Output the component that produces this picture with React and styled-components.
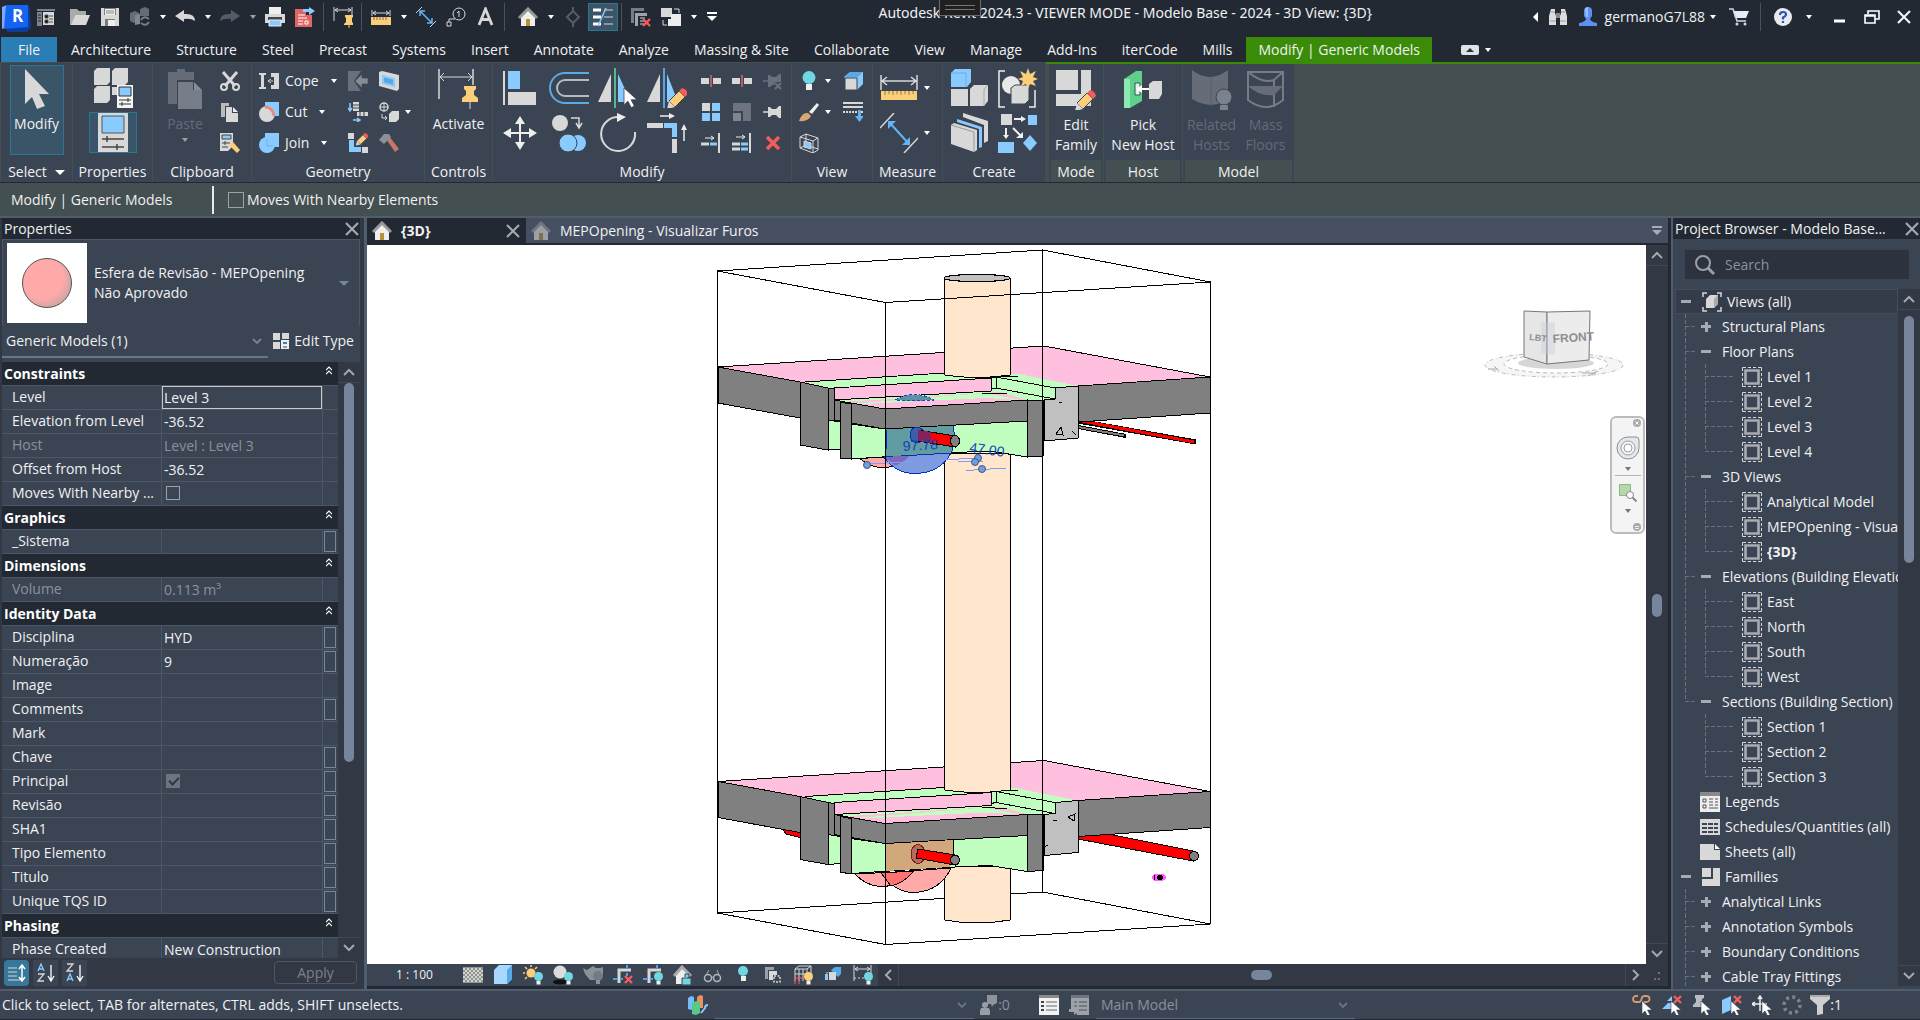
import styled, { createGlobalStyle, css } from "styled-components"

const C = {
    dark: "#222933",
    panel: "#3b4453",
    track: "#323844",
    olive: "#434f50",
    line: "#4b5667",
    frame: "#505d6e",
    thumb: "#76859c",
    text: "#f0f1f2",
    dim: "#8b919b",
    off: "#646b78",
    green: "#3a8c08",
    accent: "#2b7599"
}
const L = "#d8d8d8"
const B = "#8acbff"
const Y = "#fbcf7a"
const R = "#f45c5c"
const K = "#3b4453"
const D = "#69707c"
const T = "#70d6e0"

const GlobalStyle = createGlobalStyle`
    * {
        box-sizing: border-box;
    }
    body {
        margin: 0;
        background: ${C.dark};
        color: ${C.text};
        font-family: "Open Sans", "Noto Sans", sans-serif;
        font-size: 14px;
        line-height: 20px;
    }
    button, input, select {
        font: inherit;
        color: inherit;
        margin: 0;
        padding: 0;
        border: 0;
        background: none;
        border-radius: 0;
    }
`

/* ---------- icons ---------- */

const pencil = (x, y) => (
    <g transform={`translate(${x} ${y})`}>
        <path d="M1 13 11 3l6 6L7 19z" fill={Y} stroke={K} />
        <path d="m11 3 3-3q5 1 6 6l-3 3z" fill={R} />
        <path d="m1 13-2 8 8-2z" fill={L} />
    </g>
)
const pointer = (x, y) => (
    <path transform={`translate(${x} ${y})`} d="M0 0v13l3-3 2.500 5 2.500-1-2.500-5H10z" fill="#fff" stroke={K} strokeWidth=".6" />
)
const bulb = (x, y, fill = T) => (
    <g transform={`translate(${x} ${y})`}>
        <circle cx="4.500" cy="4.500" r="4.500" fill={fill} />
        <path d="M2.500 9h4v3.500h-4z" fill="#eee" />
    </g>
)
const cross = (x, y, s = 8) => (
    <path d={`M${x} ${y}l${s} ${s}M${x + s} ${y}l${-s} ${s}`} stroke={R} strokeWidth="2.400" fill="none" />
)

const icons = {
    revit: [30, 32, <>
        <path d="M4 9 28 4l2 22-4 5H6z" fill="#0a3f9e" />
        <path d="M1 6 6 4v22l-5 2z" fill="#7fa8ff" />
        <path d="M5 4h22v22L3 28z" fill="#1463f3" />
        <text x="11" y="21" fontSize="17" fontWeight="700" fill="#fff" fontFamily="Open Sans, sans-serif">R</text>
    </>],
    start: [20, 20, <>
        <path d="M1 2h18v2H1zM1 5h5v14H1z" fill="#7d838d" /><path d="M7 5h11v13H7z" fill={L} />
        <path d="M2 8h3M2 11h3M2 14h3" stroke={C.dark} /><path d="M9 8h3v3H9zM9 13h3v3H9zM13 9h4M13 12h4M13 15h4" stroke="#555" />
    </>],
    open: [20, 20, <><path d="M0 2h7l2 2h7v4H5L2 18H0z" fill="#aaa" /><path d="M5 8h15l-4 10H1z" fill={L} /></>],
    save: [20, 20, <><path d="M1 1h18v18H1z" fill={L} /><path d="M4 1h12v7H4zM5 12h10v7H5z" fill="#7c7c7c" /><path d="M5 8h10V2H5zM8 13h7v6H8z" fill="#eee" /><path d="M6 4h8M6 6h8" stroke="#888" /></>],
    sync: [22, 20, <><path d="m1 6 5-2 4 2v8l-5 2-4-2zM11 2l5-2 4 2v7H11z" fill="#666c76" /><path d="m6 8 5-1v10l-5 1z" fill="#80858e" /><path d="M12 13q3-5 8-1M20 15q-3 5-8 1" stroke="#777d87" fill="none" strokeWidth="2" /></>],
    undo: [20, 20, <path d="m0 9 9-6v4q11-1 11 7-4-3-11-2v3z" fill={L} />],
    redo: [20, 20, <path d="m20 9-9-6v4Q0 6 0 14q4-3 11-2v3z" fill="#555c68" />],
    print: [20, 20, <><path d="M4 0h12v7H4z" fill="#eee" /><path d="M0 7h20v9H0z" fill={L} /><path d="M3 10h14v3H3z" fill="#444" /><path d="M4 13h12v6H4z" fill={B} stroke="#eee" /></>],
    pdf: [20, 20, <><path d="M0 2h11v6h6v12H0z" fill="#e06565" /><path d="M3 8h7M3 11h9M3 14h5M3 17h5M10 14h3v3h-3z" stroke="#fff" fill="none" /><path d="M8 2h6V0l6 4-6 4V5H8z" fill={B} /></>],
    alignDim: [20, 22, <><path d="M1 1v14M19 1v9M2 4h16M5 2 2 4l3 2M15 2l3 2-3 2" stroke={L} fill="none" /><path d="M12 9h8v2l-1 1v4l2 2v1h-10v-1l2-2v-4l-1-1z" fill={Y} /><path d="M16 18v4" stroke={Y} /></>],
    measure: [20, 20, <><path d="M1 3v6M19 3v6M2 6h16M5 4 2 6l3 2M15 4l3 2-3 2" stroke={L} fill="none" /><path d="M0 10h20v8H0z" fill={Y} /><path d="M3 10v3M6 10v3M9 10v3M12 10v3M15 10v3" stroke="#866" /></>],
    dimLine: [20, 20, <><path d="M0 6 6 0M14 20l6-6" stroke={L} /><path d="m4 4 12 12M4 9V4h5M11 16h5v-5" stroke="#64b4f5" fill="none" strokeWidth="1.500" /></>],
    tag: [20, 20, <><circle cx="13" cy="7" r="6" fill="none" stroke={L} /><path d="m11 6 2-2v6M9 12H3v3" stroke={L} fill="none" /><path d="M1 15h4v4H1z" fill="none" stroke={L} /></>],
    letter: [20, 20, <path d="M3 18 9.500 2 16 18M5.500 12.500h8" stroke={L} fill="none" strokeWidth="2.800" />],
    home: [20, 20, <><path d="M3 9v10h14V9l-7-7z" fill="#eee" /><path d="m1 11 9-9 9 9" stroke="#999" strokeWidth="3" fill="none" /><path d="M8 12h4v7H8z" fill="#bb8f32" /></>],
    diamond: [20, 20, <><path d="m10 4 6 6-6 6-6-6z" fill="none" stroke="#555c68" strokeWidth="2" /><path d="M10 0v4M10 16v4" stroke="#555c68" strokeWidth="2" /></>],
    thin: [20, 20, <><path d="M0 3h8M0 10h8M0 17h8" stroke="#fff" strokeWidth="3" /><path d="M11 3h9M11 10h9M11 17h9" stroke={L} /><path d="M5 19 13 1" stroke={B} strokeWidth="1.500" /></>],
    closeWin: [20, 20, <><path d="M0 1h13v3H3v12H0z" fill="#777d87" /><path d="M4 6h12v3H7v10H4z" fill="#a0a4aa" /><path d="M9 11h5M9 14h4M9 17h4" stroke={L} />{cross(12, 12, 7)}</>],
    switchWin: [20, 20, <><path d="M0 1h11v9H0z" fill={L} /><path d="M10 7h10v12H7V12h3z" fill="#eee" /><path d="M13 2h5v4M6 18H2v-5" stroke={L} fill="none" /></>],
    custom: [10, 10, <><path d="M0 1h10" stroke="#fff" strokeWidth="2" /><path d="M0 4h10L5 9z" fill="#fff" /></>],
    binoc: [20, 20, <><path d="M3 2h4v4l1 3v9H1v-9zM13 2h4l2 7v9h-7v-9l1-3z" fill="#ddd" /><path d="M8 6h4v5H8z" fill="#888" /><path d="M2 14h6M12 14h6M3 5h4M13 5h4" stroke="#999" /></>],
    user: [18, 20, <><path d="M5 4q0-4 4-4t4 4v5l-2 3q1 3 7 4v3H0v-3q6-1 7-4L5 9z" fill="#5f8ff0" /><path d="M6 2q1-2 3-2v10H7z" fill="#9ebdff" /></>],
    cart: [20, 18, <><path d="M4 3h16l-3 7H6z" fill="#e8ecf5" /><path d="M0 1h4l4 12h9" stroke="#cfd8ee" fill="none" strokeWidth="1.500" /><circle cx="8" cy="16" r="1.500" fill="#cfd8ee" /><circle cx="16" cy="16" r="1.500" fill="#cfd8ee" /></>],
    help: [20, 20, <><circle cx="10" cy="10" r="9" fill="#e8eaf0" /><path d="M7 8q0-3 3-3t3 2.500q0 1.500-3 3v2M10 14v2" stroke="#2a55b5" strokeWidth="2.200" fill="none" /></>],
    min: [12, 12, <path d="M0 10h11" stroke="#fff" strokeWidth="3" />],
    restore: [16, 14, <path d="M4 4V1h11v8h-4M1 5h10v8H1zM1 6h10" stroke="#fff" strokeWidth="1.600" fill="none" />],
    close: [14, 14, <path d="m1 1 12 12M13 1 1 13" stroke="currentColor" strokeWidth="2.200" />],
    arrow: [24, 40, <path d="M0 0v35l7-7 5 12 8-3-6-12h10z" fill={L} />],
    typeProps: [40, 40, <>
        <path d="m1 3 3-3h13v14l-3 3H1zM19 3l3-3h13v14l-3 3H19zM1 21l3-3h13v14l-3 3H1z" fill={L} />
        <path d="M19 19h16v8H19z" fill={L} /><path d="M24 17h16v23H24z" fill="#f5f5f5" /><path d="M26 19h12v9H26z" fill={B} stroke="#333" />
        <path d="M26 32h12M26 36h12M35 30v4M29 34v4" stroke="#333" />
    </>],
    props: [30, 40, <><path d="M0 0h30v40H0z" fill={L} /><path d="M4 3h22v17H4z" fill={B} stroke="#555" /><path d="M4 26h22M4 34h22M9 23v6M19 31v6" stroke="#444" strokeWidth="1.500" /></>],
    paste: [34, 40, <><path d="M0 3h9V0h8v3h9v8H9v24H0z" fill="#666d79" /><path d="M10 13h15v8h9v19H10z" fill="#777e89" /><path d="m26 13 8 8h-8z" fill="#868c96" /></>],
    cut: [20, 20, <><path d="M3 1 15 15M17 1 5 15" stroke={L} strokeWidth="3" /><circle cx="4" cy="16" r="3" fill="none" stroke={L} strokeWidth="2" /><circle cx="16" cy="16" r="3" fill="none" stroke={L} strokeWidth="2" /></>],
    copy: [20, 20, <><path d="M1 1h8v3H5v11H1z" fill="#bbb" /><path d="M6 5h6v6h6v9H6z" fill={L} /><path d="m13 5 5 5h-5z" fill="#eee" /></>],
    match: [20, 20, <><path d="M0 0h13v13l-5 5H0z" fill={L} /><path d="M2 2h9v4H2z" fill={B} stroke="#444" /><path d="M2 10h8M2 14h6M5 8v4" stroke="#444" /><path d="m9 12 4-3 7 8-3 3z" fill={Y} /></>],
    cope: [20, 20, <><path d="M0 2h7v2H5v12h2v2H0v-2h2V4H0z" fill={L} /><path d="M9 10h5M12 8l-3 2 3 2" stroke={L} /><path d="M12 2h8v16h-8v-4h3V6h-3z" fill={L} /></>],
    cutGeo: [20, 20, <><path d="M6 0h14v14h-5Q15 4 6 6z" fill={B} /><circle cx="8" cy="12" r="8" fill={L} /><path d="M6 5q8 0 9 9" stroke="#e58a8a" strokeWidth="3" fill="none" /></>],
    join: [20, 20, <><path d="M6 0h14v14H6z" fill={B} /><circle cx="8" cy="12" r="8" fill={B} /><path d="M8 6v7h6" stroke="#6bb2ec" fill="none" /></>],
    notch: [20, 20, <><path d="M0 0h13L6 10l7 10H0z" fill={D} /><path d="m7 10 7-7v4h6v6h-6v4z" fill="#858b95" stroke={K} strokeWidth=".6" /></>],
    wallJoin: [20, 20, <><path d="M5 0h6v9H5zM9 10h11v4H9z" fill={L} /><path d="M2 1v7M0 6l2 3 2-3M5 18h6M9 16l3 2-3 2" stroke={B} fill="none" strokeWidth="1.500" /><path d="M5 3h6M5 6h6M12 10v4M16 10v4" stroke={K} /></>],
    beam: [20, 20, <><path d="M0 0h6v6H0zM14 14h6v6h-6z" fill={L} /><path d="M1 7h5v7h7v5H1z" fill={B} /><g transform="scale(.6) translate(14 0)">{pencil(0, 0)}</g></>],
    face: [20, 20, <><path d="m0 1 3-1 17 4v14l-2 2L0 15z" fill={L} /><path d="m4 5 11 3v7L4 12z" fill="#57a7e6" stroke={B} strokeWidth="2" /></>],
    split: [20, 20, <><circle cx="5" cy="5" r="4" fill="none" stroke={L} strokeWidth="1.500" /><path d="M5 1v8M1 5h8M3 12v4h4M6 14l2 2-2 2" stroke={L} fill="none" /><path d="m10 12 3-3h7v8l-3 3h-7z" fill={L} /></>],
    hammer: [20, 20, <><path d="m7 6 3-3 10 13-4 3z" fill="#c4776b" /><path d="m0 7 5-6h5l2 3-7 7z" fill="#8a8f98" /></>],
    activate: [42, 40, <><path d="M1 0v30M35 0v16" stroke={L} strokeWidth="1.500" /><path d="M2 8h32M6 4 2 8l4 4M30 4l4 4-4 4" stroke={L} fill="none" /><path d="M26 17h12v3l-2 2v4l4 3v4H24v-4l4-3v-4l-2-2z" fill={Y} /><path d="M32 33v7" stroke={L} /></>],
    align: [34, 36, <><path d="M1 1v34" stroke={L} strokeWidth="2" /><path d="M5 1h12v18H5z" fill={B} /><path d="M5 22h28v13H5z" fill={L} /></>],
    offset: [40, 36, <><path d="M40 3H16a14 14 0 0 0 0 30h24" stroke="#5da9e4" strokeWidth="2" fill="none" /><path d="M40 10H16a8 8 0 0 0 0 16h24" stroke="#b5bac2" strokeWidth="2" fill="none" /></>],
    mirrorPick: [40, 40, <><path d="M0 34 13 6v28z" fill={L} /><path d="M20 6v28h13z" fill={B} /><path d="M17 0v40" stroke="#57b98b" strokeWidth="2" /><g transform="translate(26 20) scale(1.300)">{pointer(0, 0)}</g></>],
    mirrorDraw: [40, 40, <><path d="M0 34 13 6v28z" fill={L} /><path d="M20 6v28h11z" fill={B} /><path d="M17 0v40" stroke="#5aa5df" strokeWidth="2" />{pencil(21, 20)}</>],
    move: [34, 34, <><path d="M17 4v26M4 17h26" stroke="#eee" strokeWidth="2" /><path d="m17 0 5 8H12zM17 34l5-8H12zM0 17l8-5v10zM34 17l-8-5v10z" fill="#eee" /></>],
    copyBig: [36, 38, <><circle cx="9" cy="9" r="8" fill={L} /><path d="M20 4h8v9M25 9l3 5 3-5" stroke={L} fill="none" strokeWidth="1.500" /><circle cx="27" cy="29" r="8" fill={B} /><circle cx="17" cy="29" r="9" fill={B} stroke={K} /></>],
    rotate: [38, 40, <><path d="M36 19A17 17 0 1 1 20 4" stroke={L} strokeWidth="2" fill="none" /><path d="m18 0 9 4-9 5z" fill="#eee" /></>],
    trim: [40, 40, <><path d="M0 10h16v5H0z" fill={L} /><path d="M17 10h13v14h-5v-9h-8z" fill={B} /><path d="M25 26h5v14h-5z" fill={L} /><path d="M13 3h10M37 28V16" stroke="#eee" strokeWidth="1.500" /><path d="m22 0 6 3-6 3zM34 17l3-6 3 6z" fill="#eee" /></>],
    splitEl: [20, 20, <><path d="M0 7h8v6H0zM12 7h8v6h-8z" fill={L} /><path d="M10 4v12" stroke="#d66" strokeWidth="1.500" /></>],
    unpin: [20, 20, <><path d="M0 10h6" stroke={D} strokeWidth="1.500" /><path d="M5 4h2l2 2h4l3-3h2v8h-6l-1 3H9l-2 2H5z" fill={D} /><path d="m12 12 6 6M18 12l-6 6" stroke={D} strokeWidth="2" /></>],
    array: [20, 20, <><path d="M1 1h8v8H1z" fill={L} /><path d="M11 1h8v8h-8zM1 11h8v8H1zM11 11h8v8h-8z" fill={B} /></>],
    scale: [20, 20, <><path d="M1 1h18v18H11V9H1z" fill="#6d747f" /><path d="M1 11h8v8H1z" fill="#7e858f" /></>],
    pin: [20, 20, <><path d="M0 10h6" stroke={L} strokeWidth="1.500" /><path d="M5 5h2l2 2h4l3-3h2v12h-2l-3-3H9l-2 2H5z" fill={L} /></>],
    trim1: [20, 20, <><path d="M4 5h8M10 3l3 2-3 2" stroke="#eee" fill="none" /><path d="M0 11h8" stroke={L} strokeWidth="3" /><path d="M9 11h7" stroke={B} strokeWidth="3" /><path d="M18 0v20" stroke={L} strokeWidth="2" /></>],
    trim2: [20, 20, <><path d="M4 4h8M10 2l3 2-3 2" stroke="#eee" fill="none" /><path d="M0 11h8M0 16h8" stroke={L} strokeWidth="3" /><path d="M9 11h7M9 16h7" stroke={B} strokeWidth="3" /><path d="M18 0v20" stroke={L} strokeWidth="2" /></>],
    del: [20, 20, <path d="m4 4 12 12M16 4 4 16" stroke={R} strokeWidth="3.500" />],
    bulb: [20, 20, <><circle cx="10" cy="6.500" r="6.500" fill={T} /><path d="M7 13h6v6H7z" fill="#eee" /></>],
    bulbSmall: [20, 20, <><circle cx="10" cy="6" r="5" fill={T} /><path d="M8 11h5v5H8z" fill="#eee" /></>],
    cube: [20, 20, <><path d="m1 6 6-5h13v12l-6 6" fill={B} /><path d="M2 7h12v12H2z" fill={L} stroke={K} /><path d="m2 6 5-5h13l-5 5z" fill="#58a9e8" /></>],
    brush: [20, 20, <><path d="m10 10 8-9 2 2-7 9z" fill="#eee" /><path d="M0 19q3-9 9-8l3 3q-3 6-12 5z" fill="#d8a873" /></>],
    lines: [20, 20, <><path d="M0 1h20M0 5h20" stroke={L} strokeWidth="2" /><path d="M0 10h20" stroke={L} strokeDasharray="2 1" strokeWidth="2" /><path d="M15 8v6h-3l4.500 6 4.500-6h-3V8z" fill="#64b4f5" /></>],
    box3: [20, 20, <><path d="M1 4 7 1l12 4v12l-5 3L1 15zM1 4l13 4 5-3M14 8v12M7 1v11l12 4M7 12l-6 3" stroke={L} fill="none" /><path d="m5 8 7 2v6l-7-2z" fill={B} stroke={L} /></>],
    measureBig: [38, 26, <><path d="M1 0v15M37 0v15M2 6h34M7 2 2 6l5 4M31 2l5 4-5 4" stroke={L} fill="none" strokeWidth="1.500" /><path d="M1 16h36v9H1z" fill={Y} /><path d="M5 16v4M9 16v3M13 16v4M17 16v3M21 16v4M25 16v3M29 16v4M33 16v3" stroke="#967945" /></>],
    dimBig: [38, 40, <><path d="M0 15 14 0M24 40 38 25" stroke={L} strokeWidth="1.500" /><path d="m9 9 20 22" stroke="#64b4f5" strokeWidth="2" /><path d="M8 8h8l-8 8zM30 32h-8l8-8z" fill="#64b4f5" /></>],
    assembly: [38, 38, <><path d="m0 4 4-4h16v13l-4 5H0z" fill={B} /><path d="M0 4h15v14" stroke="#62b0ec" fill="none" /><path d="M0 20h17v17H0z" fill={L} /><path d="m19 20 4-4h14v16l-4 5H19z" fill={L} /><path d="M33 37V20l4-4" stroke="#aaa" fill="none" /></>],
    group: [40, 40, <><path d="M7 3H1v36h6M31 39h6V22" stroke="#eee" strokeWidth="1.500" fill="none" /><circle cx="13" cy="17" r="9" fill="#e8e8e8" /><path d="m13 20 4-3h14v15l-4 4H13z" fill={L} stroke={K} /><path d="m30 0 2 6 6-3-3 6 5 2-5 2 3 5-6-2-2 5-2-5-5 2 2-5-5-2 5-2-3-6 6 3z" fill={Y} /></>],
    part: [38, 40, <><path d="m12 0 25 8v20l-4 2V12L12 4z" fill={L} /><path d="m6 6 25 8v20l-3 1V16L6 9z" fill={B} /><path d="m0 12 3-2 23 7v20l-3 2-23-8z" fill={L} /><path d="m0 12 23 7v20" stroke="#999" fill="none" /></>],
    similar: [40, 40, <><path d="M3 1h11v11H3z" fill={L} /><path d="M30 2h9v10h-9z" fill={B} /><path d="M16 6h8M8 15v7M15 15l8 8" stroke="#eee" strokeWidth="2" /><path d="m23 3 5 3-5 3zM5 22h6l-3 4zM25 19v6h-7z" fill="#eee" /><path d="M0 29h16v11H0zM32 22l7 8-7 8-7-8z" fill={B} /></>],
    editFamily: [40, 40, <><path d="M0 0h22v20H0z" fill={L} /><path d="M25 0h10v36H0V24h25z" fill={L} />{pencil(20, 20)}</>],
    pickHost: [40, 40, <><path d="m1 9 12-8h6v30L7 38H1z" fill="#5fd08c" /><path d="m1 9 6 0v29H1z" fill="#8ceab0" /><path d="M12 13h5v12h-5z" fill="#eee" stroke="#2d5d45" /><path d="M16 19h11" stroke="#fff" strokeWidth="2" /><path d="m13 19 6-4v8z" fill="#fff" /><path d="m26 14 4-3h9v13l-3 5H26z" fill={L} /></>],
    relHosts: [40, 40, <><path d="M0 0q18 14 36 0v30q-18 10-36-1z" fill="#666d79" /><path d="M19 8v28" stroke="#59606c" /><circle cx="32" cy="27" r="8" fill="#7b828d" stroke={K} /><path d="M28 35h8v5h-8z" fill="#7b828d" /></>],
    massFloors: [40, 40, <><path d="M2 2h35v28q-17 14-35 0zM2 2q15 12 26 8l9-8M28 10v27" stroke="#757c87" strokeWidth="2" fill="none" /><path d="M2 16h35l-9 9q-14 2-26-9z" fill="#666d79" /></>],
    sphere: [80, 80, <><defs><radialGradient id="sph" cx=".4" cy=".4" r=".65"><stop offset=".65" stopColor="#ffa9a9" /><stop offset="1" stopColor="#c9a5a3" /></radialGradient></defs><circle cx="40" cy="40" r="24.500" fill="url(#sph)" stroke="#555" /></>],
    editType: [16, 16, <><path d="M0 0h7v7H0zM9 0h7v6H9zM0 9h7v7H0z" fill={L} /><path d="M8 7h8v9H8z" fill="#eee" /><path d="M10 9h4v2h-4z" fill="#3b82c4" /><path d="M10 14h4" stroke="#444" /></>],
    chevUp: [12, 8, <path d="m1 7 5-5 5 5" stroke="currentColor" strokeWidth="2" fill="none" />],
    chevDown: [12, 8, <path d="m1 1 5 5 5-5" stroke="currentColor" strokeWidth="2" fill="none" />],
    chevSmall: [10, 8, <path d="m1 2 4 4 4-4" stroke="currentColor" strokeWidth="1.800" fill="none" />],
    chevLeft: [8, 12, <path d="M7 1 2 6l5 5" stroke="currentColor" strokeWidth="2" fill="none" />],
    chevRight: [8, 12, <path d="m1 1 5 5-5 5" stroke="currentColor" strokeWidth="2" fill="none" />],
    collapse: [6, 9, <path d="m0 4 3-3 3 3M0 8l3-3 3 3" stroke="#fff" fill="none" strokeWidth="1.200" />],
    sort: [20, 20, <><path d="M1 5h9M1 9h9M1 13h9M1 17h12" stroke={L} /><path d="M15 3v14M12 6l3-4 3 4M12 14l3 4 3-4" stroke="#fff" fill="none" strokeWidth="1.500" /></>],
    az: [20, 20, <><path d="M2 8 5 1l3 7M3 6h4" stroke={B} fill="none" strokeWidth="1.300" /><path d="M2 11h6l-6 7h6" stroke={L} fill="none" strokeWidth="1.300" /><path d="M15 2v15M12 13l3 5 3-5" stroke="#fff" fill="none" strokeWidth="1.300" /></>],
    za: [20, 20, <><path d="M2 1h6L2 8h6" stroke={L} fill="none" strokeWidth="1.300" /><path d="m2 18 3-7 3 7M3 16h4" stroke={B} fill="none" strokeWidth="1.300" /><path d="M15 2v15M12 13l3 5 3-5" stroke="#fff" fill="none" strokeWidth="1.300" /></>],
    search: [20, 20, <><circle cx="8" cy="8" r="7" fill="none" stroke="#9aa0aa" strokeWidth="2" /><path d="m13 13 6 6" stroke="#9aa0aa" strokeWidth="3" /></>],
    views: [20, 20, <><path d="M1 5V1h4M15 1h4v4M19 15v4h-4M5 19H1v-4" stroke={L} fill="none" strokeWidth="1.500" /><path d="m4 7 4-4h8v9l-4 4H4z" fill={L} /><path d="m12 7 4-4v9l-4 4z" fill="#aaa" /></>],
    view: [20, 20, <><path d="M.5 4V.5H4M16 .5h3.500V4M19.500 16v3.500H16M4 19.500H.5V16M6 .5h3M11 .5h3M6 19.500h3M11 19.500h3M.5 6v3M.5 11v3M19.500 6v3M19.500 11v3" stroke={L} fill="none" /><path d="M3.500 3.500h13v13h-13z" stroke="#a9acb2" fill="none" strokeWidth="2.600" /></>],
    legend: [20, 20, <><path d="M0 0h20v20H0z" fill="#eee" /><path d="M0 0h20v4H0z" fill="#8a8a85" /><path d="M3 7h3v3H3zM3 13h3v3H3zM9 7h4M15 7h3M9 10h4M15 10h3M9 13h4M15 13h3M9 16h9" stroke="#555" fill="none" /></>],
    schedule: [20, 16, <><path d="M0 0h20v16H0z" fill={L} /><path d="M2 5h5M8 5h5M14 5h4M2 9h5M8 9h5M14 9h4M2 13h5M8 13h5M14 13h4" stroke={K} strokeWidth="2" /></>],
    sheet: [20, 16, <><path d="M0 0h14v6h6v10H0z" fill={L} /><path d="m15 0 5 5h-5z" fill="#fff" /></>],
    family: [18, 18, <><path d="M0 0h9v9H0z" fill={L} /><path d="M11 0h7v18H0v-7h11z" fill={L} /></>],
    detail: [20, 16, <><path d="M0 0h20v16H0z" fill="#8f948e" /><path d="M0 2h20M0 6h20M0 10h20M0 14h20" stroke="#d3d4cd" strokeWidth="2" strokeDasharray="2 2" /><path d="M2 4h20M2 8h20M2 12h20" stroke="#d3d4cd" strokeWidth="2" strokeDasharray="2 2" /></>],
    shaded: [18, 20, <><path d="m0 5 5-5h13v14l-5 5H0z" fill="#a9d8ff" /><path d="m13 5 5-5v14l-5 5z" fill="#58a9e8" /></>],
    sun: [20, 20, <><circle cx="8" cy="8" r="4.500" fill={Y} /><path d="M8 0v2M0 8h2M2 2l2 2M14 2l-2 2M2 14l2-2M14 8h2" stroke={Y} strokeWidth="1.500" />{bulb(11, 7)}</>],
    shadow: [20, 20, <><ellipse cx="7" cy="17" rx="7" ry="2.500" fill="#111" /><circle cx="7" cy="7" r="6.500" fill="#dcdcdc" />{bulb(11, 7)}</>],
    teapot: [20, 20, <><path d="m0 3 4 2 3-2 3-2 3 2h4l3-1v7l-3 6H7L2 9z" fill="#8b9099" /><circle cx="15" cy="11" r="5" fill="#757b85" /><path d="M13 15h4v4h-4z" fill="#8b9099" /></>],
    crop: [20, 20, <><path d="M6 18V5h12" stroke={L} strokeWidth="3" fill="none" /><path d="M0 14h4M14 0v3M14 8v3M7 14h3" stroke="#4ba2ec" strokeWidth="2" />{cross(12, 11, 7)}</>],
    cropShow: [20, 20, <><path d="M6 18V5h12" stroke={L} strokeWidth="3" fill="none" /><path d="M0 14h4M14 0v3M7 14h3" stroke="#4ba2ec" strokeWidth="2" />{bulb(11, 7)}</>],
    lock3d: [20, 20, <><path d="M3 9v10h7l7-10-7-7z" fill="#eee" /><path d="m1 11 8-9 9 9" stroke="#aaa" strokeWidth="3" fill="none" /><path d="M9 13h9v7H9zM12 12V9h4v3" fill={T} stroke={K} /></>],
    glasses: [20, 20, <><circle cx="5" cy="13" r="3.500" fill="none" stroke="#b4b8be" strokeWidth="1.500" /><circle cx="14" cy="13" r="3.500" fill="none" stroke="#b4b8be" strokeWidth="1.500" /><path d="M8 12h3M3 10l3-5M16 10l-2-5" stroke="#aaa" /></>],
    props2: [20, 20, <><path d="M2 2h9v3H5v9H2z" fill="#9aa0a8" /><path d="M6 6h8v4h-4v5H6z" fill={L} /><path d="M11 11h6v6h-6z" stroke={L} strokeDasharray="2 1.500" fill="none" strokeWidth="1.500" /></>],
    analytic: [20, 20, <><path d="m2 4 4-3h12v10M2 4h12v8M2 4v12M6 4v12M10 4v12M2 9h12M14 4l4-3" stroke={L} fill="none" /><path d="M1 13h10M2 19v-6M6 19v-6" stroke={R} />{bulb(11, 7, Y)}</>],
    displace: [20, 20, <><path d="m8 5 4-3h6v7l-3 3z" fill="#58a9e8" /><path d="M6 7h7v8H6z" fill={L} /><path d="m3 9 3-2h-2l-1 1zM2 9h3v6H2z" fill={B} /></>],
    reveal: [20, 20, <><path d="M1 0v16M18 0v9M2 4h15M5 2 2 4l3 2M14 2l3 2-3 2" stroke={L} fill="none" /><path d="M1 13h12" stroke={L} strokeDasharray="2 2" />{bulb(11, 7)}</>],
    worksets: [20, 20, <><path d="m0 3 3-2 3 1v11l-3 2-3-1z" fill="#78bdf5" /><path d="m9 2 3-2 3 1v12H9z" fill="#e8935e" /><path d="m4 8 4-2 4 1v11l-4 2-4-1z" fill="#5cc887" /><path d="m13 18 4-5q0-3 3-3" stroke={B} strokeWidth="2" fill="none" /></>],
    request: [18, 20, <><path d="M7 0h10v8l-4 2-1 2-1-3H7z" fill="#8f949c" /><circle cx="5" cy="10" r="3" fill="#9a9ea6" /><path d="M1 13h8l1 3v4H0v-4z" fill="#9a9ea6" /></>],
    list: [20, 20, <><path d="M0 0h20v20H0z" fill="#f2f2f2" /><path d="M0 0h20v3H0z" fill="#8a8a88" /><path d="M2 7h3M2 11h3M2 15h3" stroke="#444" strokeWidth="2" /><path d="M7 7h11M7 11h11M7 15h11" stroke="#666" /></>],
    listOff: [20, 20, <><path d="M2 0h18v20H8l-2-5H2z" fill="#9da1a8" /><path d="M2 0h18v3H2z" fill="#71767e" /><path d="M5 7h3M5 11h3M10 7h8M10 11h8M10 15h8" stroke="#4b5361" /><path d="M0 14h5v-3l5 5-5 4v-3H0z" fill="#9da1a8" /></>],
    selLinks: [20, 20, <><path d="M6 1h-2a2.500 2.500 0 0 0 0 6h3q2 0 2.500-3t3-3h2a2.500 2.500 0 0 1 0 6h-3" stroke="#d39a72" strokeWidth="1.800" fill="none" />{pointer(10, 6)}</>],
    selUnder: [20, 20, <><path d="m5 6 5-5v5zM0 14l6-6h6v6z" fill={B} />{cross(12, 1, 7)}{pointer(9, 6)}</>],
    selPin: [20, 20, <><path d="M3 0h9v3l-2 1v3l3 3v2H1v-2l3-3V4L3 3z" fill="#b9bcc1" />{pointer(9, 6)}</>],
    selFace: [20, 20, <><path d="m0 5 9-4v14l-9 4z" fill={B} />{cross(12, 1, 7)}{pointer(9, 6)}</>],
    drag: [20, 20, <><path d="M8 2v14M1 9h14M6 4l2-3 2 3M3 7 0 9l3 2" stroke="#eee" strokeWidth="1.500" fill="none" />{pointer(10, 6)}</>],
    spin: [20, 20, <circle cx="10" cy="10" r="8" fill="none" stroke="#7d838e" strokeWidth="3.500" strokeDasharray="3 3.280" />],
    filter: [20, 20, <><path d="M0 0h20v4l-7 6v9l-6 1V10L0 4z" fill="#cfcfcf" /><path d="M0 1h20" stroke="#aaa" strokeWidth="2" /></>],
    wheel: [24, 24, <><path d="M12 1h8q3 0 3 3v8a11 11 0 1 1-11-11z" fill="#e4e7ec" stroke="#8b9097" /><circle cx="12" cy="12" r="7" fill="#f4f4f4" stroke="#9aa0a6" /><circle cx="12" cy="12" r="4" fill="#fff" stroke="#9aa0a6" /></>],
    zoomBox: [18, 18, <><path d="M.5.5h11v11H.5z" fill="#b8d6ae" stroke="#8bb882" /><circle cx="11" cy="11" r="3.500" fill="#fff" stroke="#888" /><path d="m13.500 13.500 4 4" stroke="#888" strokeWidth="2" /></>],
    dotClose: [8, 8, <><circle cx="4" cy="4" r="4" fill="#aaa" /><path d="m2.500 2.500 3 3M5.500 2.500l-3 3" stroke="#fff" /></>],
    dotMenu: [8, 8, <><circle cx="4" cy="4" r="4" fill="#aaa" /><path d="M2 3.500h4M2 5.500h4" stroke="#fff" strokeWidth=".8" /></>],
    ribbonMode: [18, 10, <><rect width="18" height="10" rx="2" fill="#dfe2e6" /><path d="m5 7 4-4 4 4z" fill="#333" /></>],
    tabMenu: [10, 9, <><path d="M0 1h10" stroke="#a6adb8" strokeWidth="2" /><path d="M0 4h10L5 9z" fill="#a6adb8" /></>]
}

function Icon({ name }) {
    const [w, h, art] = icons[name]
    return <Svg width={w} height={h} viewBox={`0 0 ${w} ${h}`} aria-hidden="true">{art}</Svg>
}

/* ---------- title bar ---------- */

const quickAccess = [
    "start", "gap", "open", "save", "sync", "v", "undo", "v", "redo", "vdim", "print", "pdf", "|", "alignDim", "|",
    "measure", "v", "dimLine", "tag", "letter", "|", "gap", "home", "v", "diamond", "thin*", "|", "closeWin", "switchWin", "v"
]

function TitleBar() {
    return (
        <Title>
            <Group>
                <LogoButton aria-label="Revit"><Icon name="revit" /></LogoButton>
                {quickAccess.map((item, i) => {
                    if (item === "|") return <Separator key={i} />
                    if (item === "gap") return <Spacer key={i} />
                    if (item[0] === "v") return <CaretButton key={i} aria-label="More"><Caret color={item === "vdim" ? "#9aa0aa" : "#fff"} /></CaretButton>
                    return <ToolButton key={i} $active={item.endsWith("*")} aria-label={item}><Icon name={item.replace("*", "")} /></ToolButton>
                })}
                <CustomizeButton aria-label="Customize"><Icon name="custom" /></CustomizeButton>
            </Group>
            <Caption>Autodesk Revit 2024.3 - VIEWER MODE - Modelo Base - 2024 - 3D View: {"{3D}"}</Caption>
            <Grabber />
            <Group>
                <CaretButton aria-label="Collapse search"><LeftCaret /></CaretButton>
                <ToolButton aria-label="Find"><Icon name="binoc" /></ToolButton>
                <ToolButton aria-label="Account"><Icon name="user" /></ToolButton>
                <UserButton>germanoG7L88<Caret /></UserButton>
                <WideTool aria-label="Store"><Icon name="cart" /></WideTool>
                <Separator />
                <WideTool aria-label="Help"><Icon name="help" /></WideTool>
                <CaretButton aria-label="Help menu"><Caret /></CaretButton>
                <WindowButtons>
                    <button aria-label="Minimize"><Icon name="min" /></button>
                    <button aria-label="Restore"><Icon name="restore" /></button>
                    <button aria-label="Close"><Icon name="close" /></button>
                </WindowButtons>
            </Group>
        </Title>
    )
}

/* ---------- ribbon ---------- */

const tabs = ["Architecture", "Structure", "Steel", "Precast", "Systems", "Insert", "Annotate", "Analyze", "Massing & Site", "Collaborate", "View", "Manage", "Add-Ins", "iterCode", "Mills"]

function Tool({ name, label, caret }) {
    return (
        <SmallTool aria-label={label ? undefined : name}>
            <Icon name={name} />
            {label && <span>{label}</span>}
            {caret && <Caret />}
        </SmallTool>
    )
}

function Ribbon() {
    return (
        <>
            <TabRow>
                <FileTab>File</FileTab>
                {tabs.map(t => <RibbonTab key={t}>{t}</RibbonTab>)}
                <ContextTab>Modify | Generic Models</ContextTab>
                <ModeButton aria-label="Ribbon display"><Icon name="ribbonMode" /><Caret /></ModeButton>
            </TabRow>
            <RibbonBody>
                <Panels>
                    <Panel $w={72}>
                        <PanelBody>
                            <BigTool $active><Icon name="arrow" /><span>Modify</span></BigTool>
                        </PanelBody>
                        <PanelLabel>Select <Caret $big /></PanelLabel>
                    </Panel>
                    <Panel $w={80}>
                        <PanelBody>
                            <Grid $cols="48px" $row={45}>
                                <IconTool aria-label="Type properties"><Icon name="typeProps" /></IconTool>
                                <IconTool $active aria-label="Properties palette"><Icon name="props" /></IconTool>
                            </Grid>
                        </PanelBody>
                        <PanelLabel>Properties</PanelLabel>
                    </Panel>
                    <Panel $w={99}>
                        <PanelBody $gap={8}>
                            <BigTool disabled><Icon name="paste" /><span>Paste</span><Caret color="#9aa0aa" /></BigTool>
                            <Grid $cols="26px" $row={31}>
                                <Tool name="cut" /><Tool name="copy" /><Tool name="match" />
                            </Grid>
                        </PanelBody>
                        <PanelLabel>Clipboard</PanelLabel>
                    </Panel>
                    <Panel $w={173}>
                        <PanelBody>
                            <Grid $cols="89px 31px 38px" $row={31}>
                                <Tool name="cope" label="Cope" caret /><Tool name="notch" /><Tool name="face" />
                                <Tool name="cutGeo" label="Cut" caret /><Tool name="wallJoin" /><Tool name="split" caret />
                                <Tool name="join" label="Join" caret /><Tool name="beam" /><Tool name="hammer" />
                            </Grid>
                        </PanelBody>
                        <PanelLabel>Geometry</PanelLabel>
                    </Panel>
                    <Panel $w={68}>
                        <PanelBody><BigTool><Icon name="activate" /><span>Activate</span></BigTool></PanelBody>
                        <PanelLabel>Controls</PanelLabel>
                    </Panel>
                    <Panel $w={299}>
                        <PanelBody>
                            <Grid $cols="repeat(4, 49px)" $row={45}>
                                {["align", "offset", "mirrorPick", "mirrorDraw", "move", "copyBig", "rotate", "trim"].map(n => (
                                    <IconTool key={n} aria-label={n}><Icon name={n} /></IconTool>
                                ))}
                            </Grid>
                            <Grid $cols="repeat(3, 31px)" $row={31}>
                                {["splitEl", "splitEl", "unpin", "array", "scale", "pin", "trim1", "trim2", "del"].map((n, i) => (
                                    <IconTool key={i} aria-label={n}><Icon name={n} /></IconTool>
                                ))}
                            </Grid>
                        </PanelBody>
                        <PanelLabel>Modify</PanelLabel>
                    </Panel>
                    <Panel $w={81}>
                        <PanelBody>
                            <Grid $cols="44px 22px" $row={31}>
                                <Tool name="bulb" caret /><Tool name="cube" />
                                <Tool name="brush" caret /><Tool name="lines" />
                                <Tool name="box3" />
                            </Grid>
                        </PanelBody>
                        <PanelLabel>View</PanelLabel>
                    </Panel>
                    <Panel $w={70}>
                        <PanelBody>
                            <Grid $cols="56px" $row={45}>
                                <Tool name="measureBig" caret /><Tool name="dimBig" caret />
                            </Grid>
                        </PanelBody>
                        <PanelLabel>Measure</PanelLabel>
                    </Panel>
                    <Panel $w={103}>
                        <PanelBody>
                            <Grid $cols="48px 48px" $row={45}>
                                {["assembly", "group", "part", "similar"].map(n => (
                                    <IconTool key={n} aria-label={n}><Icon name={n} /></IconTool>
                                ))}
                            </Grid>
                        </PanelBody>
                        <PanelLabel>Create</PanelLabel>
                    </Panel>
                </Panels>
                <ContextPanels>
                    <Panel $w={55}>
                        <PanelBody><BigTool><Icon name="editFamily" /><span>Edit<br />Family</span></BigTool></PanelBody>
                        <PanelLabel $context>Mode</PanelLabel>
                    </Panel>
                    <Panel $w={79}>
                        <PanelBody><BigTool><Icon name="pickHost" /><span>Pick<br />New Host</span></BigTool></PanelBody>
                        <PanelLabel $context>Host</PanelLabel>
                    </Panel>
                    <Panel $w={112}>
                        <PanelBody $gap={0}>
                            <BigTool disabled><Icon name="relHosts" /><span>Related<br />Hosts</span></BigTool>
                            <BigTool disabled><Icon name="massFloors" /><span>Mass<br />Floors</span></BigTool>
                        </PanelBody>
                        <PanelLabel $context>Model</PanelLabel>
                    </Panel>
                </ContextPanels>
            </RibbonBody>
            <OptionsBar>
                <OptionsTitle>Modify | Generic Models</OptionsTitle>
                <CheckLabel><Check type="checkbox" $size={16} />Moves With Nearby Elements</CheckLabel>
            </OptionsBar>
        </>
    )
}

/* ---------- properties palette ---------- */

const properties = [
    ["Constraints", [
        { name: "Level", value: "Level 3", kind: "select" },
        { name: "Elevation from Level", value: "-36.52" },
        { name: "Host", value: "Level : Level 3", off: true },
        { name: "Offset from Host", value: "-36.52" },
        { name: "Moves With Nearby ...", kind: "check" }
    ]],
    ["Graphics", [{ name: "_Sistema", more: true }]],
    ["Dimensions", [{ name: "Volume", value: "0.113 m³", off: true }]],
    ["Identity Data", [
        { name: "Disciplina", value: "HYD", more: true },
        { name: "Numeração", value: "9", more: true },
        { name: "Image" },
        { name: "Comments", more: true },
        { name: "Mark" },
        { name: "Chave", more: true },
        { name: "Principal", kind: "checked", more: true },
        { name: "Revisão", more: true },
        { name: "SHA1", more: true },
        { name: "Tipo Elemento", more: true },
        { name: "Titulo", more: true },
        { name: "Unique TQS ID", more: true }
    ]],
    ["Phasing", [{ name: "Phase Created", value: "New Construction" }]]
]

function PropertyValue({ p }) {
    if (p.kind === "select") return <LevelSelect aria-label={p.name}><option>{p.value}</option></LevelSelect>
    if (p.kind === "check") return <Check type="checkbox" $size={14} aria-label={p.name} />
    if (p.kind === "checked") return <Check type="checkbox" $size={14} defaultChecked disabled aria-label={p.name} />
    return <ValueInput aria-label={p.name} defaultValue={p.value || ""} disabled={p.off} />
}

function Scroll({ start, size, rest }) {
    return (
        <ScrollBar>
            <ScrollButton aria-label="Scroll up"><Icon name="chevUp" /></ScrollButton>
            <Track>
                <Grow $n={start} /><Thumb $n={size} /><Grow $n={rest} />
            </Track>
            <ScrollButton aria-label="Scroll down"><Icon name="chevDown" /></ScrollButton>
        </ScrollBar>
    )
}

function Properties() {
    return (
        <LeftPanel>
            <PanelTitle><span>Properties</span><CloseButton aria-label="Close properties"><Icon name="close" /></CloseButton></PanelTitle>
            <TypeSelector>
                <Preview><Icon name="sphere" /></Preview>
                <span>Esfera de Revisão - MEPOpening<br />Não Aprovado</span>
                <Caret $big color={C.thumb} />
            </TypeSelector>
            <FilterRow>
                <FilterBox>
                    <FilterSelect aria-label="Filter"><option>Generic Models (1)</option></FilterSelect>
                    <Icon name="chevSmall" />
                </FilterBox>
                <EditType><Icon name="editType" />Edit Type</EditType>
            </FilterRow>
            <TableArea>
                <TableClip>
                    <Table>
                        <colgroup><col /><col width="161" /><col width="16" /></colgroup>
                        {properties.map(([group, items]) => (
                            <tbody key={group}>
                                <tr><GroupCell colSpan={3}><div>{group}<Icon name="collapse" /></div></GroupCell></tr>
                                {items.map(p => (
                                    <tr key={p.name}>
                                        <NameCell scope="row" $off={p.off}>{p.name}</NameCell>
                                        <Cell $pad={!!p.kind && p.kind !== "select"}><PropertyValue p={p} /></Cell>
                                        <Cell>{p.more && <MoreButton aria-label={`Associate ${p.name}`} />}</Cell>
                                    </tr>
                                ))}
                            </tbody>
                        ))}
                    </Table>
                </TableClip>
                <Scroll start={0} size={378} rest={175} />
            </TableArea>
            <PaletteFooter>
                <SortButton $active aria-label="Group"><Icon name="sort" /></SortButton>
                <SortButton aria-label="Sort ascending"><Icon name="az" /></SortButton>
                <SortButton aria-label="Sort descending"><Icon name="za" /></SortButton>
                <ApplyButton disabled>Apply</ApplyButton>
            </PaletteFooter>
        </LeftPanel>
    )
}

/* ---------- 3D view ---------- */

function Slab({ dy }) {
    return (
        <g transform={`translate(0 ${dy})`} stroke="#000">
            <path d="M718 367 1044 346 1210 377 1078 386 1027 400 885 409 800 382z" fill="#ffc0e0" />
            <path d="M718 367 800 382v36l-82-15z" fill="#808080" />
            <path d="M1078 386 1210 377v36l-132 9z" fill="#808080" />
            <path d="M805 382 944 373 1018 374 1078 386 1055 388v11l-28 1-142 9-45-8-10-12z" fill="#c0ffc0" stroke="none" />
            <path d="M805 382 944 373" fill="none" />
            <path d="M834 388 991 378v13l-157 9z" fill="#ffc0e0" />
            <path d="M841 402 1000 392 1027 400 885 409z" fill="#ffc0e0" stroke="none" />
            <path d="M850 404 985 393 1020 400 985 398 862 404z" fill="#c0ffc0" stroke="none" />
            <path d="M991 377h5v11l-5 1z" fill="#c0ffc0" />
            <path d="m996 377 59 11v11l-59-11z" fill="#c0ffc0" />
            <path d="m982 393 25 1M1000 376h18M985 377h10" />
            <path d="m851 424 34 5 142-8v36l-37-6-46 2-93 6z" fill="#c0ffc0" />
            <path d="m828 420 12 2v27l-12 1z" fill="#c0ffc0" />
            <path d="m828 388 6 1v32l-6-1zM834 400l51 9 142-9v21l-142 8-51-9z" fill="#808080" />
            <path d="m800 382 28 6v62l-28-5zM840 402l11 2v55l-11-1zM1027 400h16.500v56l-16.500 1z" fill="#808080" />
            <path d="m1055 388 23-2v52l-34 3v-41l11-1z" fill="#c0c0c0" />
            <path d="M885.500 409v20" />
        </g>
    )
}

function Model() {
    return (
        <Scene viewBox="367 245 1279 719" shapeRendering="crispEdges" role="img" aria-label="3D model">
            <path d="M717.500 271 1042.500 250 1210.500 282M717.500 913 1042.500 892 1210.500 924" stroke="#000" fill="none" />

            <path d="M944.500 453v337h65.500V453z" fill="#ffe6cd" stroke="#000" />
            <path d="M944.500 866v54q32 6 65.500 0v-54z" fill="#ffe6cd" stroke="#000" />
            <path d="m1078 835 30-1 85 17v10l-115-22z" fill="#f00" stroke="#000" />
            <circle cx="1194" cy="856" r="4.500" fill="#808080" stroke="#000" />
            <path d="m782 828 20 4v6l-16-4z" fill="#f00" stroke="#000" />
            <path d="m1078 421 118 21" stroke="#000" strokeWidth="5" />
            <path d="m1082 421 112 21" stroke="#f00" strokeWidth="3" />
            <path d="m1078 427 48 9" stroke="#000" strokeWidth="4" />
            <path d="m1078 427 46 8.500" stroke="#808080" strokeWidth="2" />

            <Slab dy={0} />
            <Slab dy={414.500} />

            <path d="M944.500 278v97q32 5 65.500 0v-97z" fill="#ffe6cd" stroke="#000" />
            <ellipse cx="977" cy="278" rx="33" ry="3.500" fill="#c0c0c0" stroke="#000" />
            <path d="M944.500 730v60q32 5 65.500 0v-60z" fill="#ffe6cd" />
            <path d="M944.500 730v60q32 5 65.500 0v-60" fill="none" stroke="#000" />

            <path d="m1056 434 5-7 2 8zM1059 402h3M1072 431l4 4" fill="none" stroke="#000" />
            <path d="m1068 817 7-3-1 7zM1053 821l4-1M1044 847l4-2" fill="none" stroke="#000" />

            {/* selected sphere */}
            <path d="M895 400q19-11 39 0l-20 1z" fill="#5c92a8" stroke="#1a46b8" strokeDasharray="3 2" />
            <path d="M886 429.500 953.500 425.500v14.500l-2 12.500-67 4z" fill="#609ca0" />
            <path d="M860 458.500q10 9 22 9 18 0 28-12z" fill="#ffa9a9" stroke="#000" />
            <path d="M884 457q11 16 30 16.500 26 0 37-20.500z" fill="#7f9be0" stroke="#0033b8" />
            <path d="M884 457 910 455.500q-7 8-15 10z" fill="#7b6bb8" />
            <path d="M953.500 426q2 14-2 27M886.500 430q0 15-1 26" fill="none" stroke="#0033b8" />
            <ellipse cx="917" cy="435" rx="7" ry="8" fill="#3d5fa5" stroke="#0033b8" />
            <path d="m918 430 37 6v11l-37-6z" fill="#f00" stroke="#000" />
            <path d="m918 430 13 2v11l-13-2z" fill="#87205f" />
            <ellipse cx="955" cy="441" rx="4.500" ry="5.500" fill="#808080" stroke="#000" />

            {/* lower spheres */}
            <path d="M886 844 953 840 954 860 950 867 886 871z" fill="#d1a87b" />
            <path d="M953 840v20" stroke="#000" />
            <path d="M855 874q11 12 26 12.500 20 0 34-15.500z" fill="#ffa9a9" stroke="#000" />
            <path d="M881 873q14 19.500 33 19.500 26-1 37-24.500z" fill="#ffa9a9" stroke="#000" />
            <path d="M881 873 914 871q-10 12-23 15z" fill="#ff7070" stroke="#000" />
            <ellipse cx="918" cy="854" rx="7" ry="9.500" fill="#b86a5c" stroke="#7a2020" />
            <path d="m918 849 37 6v10l-39-7z" fill="#f00" stroke="#000" />
            <ellipse cx="955" cy="860" rx="4.500" ry="5" fill="#808080" stroke="#000" />
            <ellipse cx="1159" cy="877.500" rx="7" ry="4" fill="#ff5cff" />
            <circle cx="1160" cy="877.500" r="3" />
            <path d="M1155 875q-2 3 0 5" stroke="#000" fill="none" />

            {/* temporary dimensions */}
            <path d="M867 464 978 458M958 462l25-1M966 470.500l40-2.500" stroke="#7f9bf5" />
            <g fill="#6b9fe6" stroke="#4a5670" shapeRendering="auto">
                <circle cx="867" cy="465" r="3.500" /><circle cx="978" cy="458" r="3.500" />
                <circle cx="975" cy="462" r="3.500" /><circle cx="982" cy="469" r="3.500" />
            </g>
            <g fill="#1442b8" fontFamily="Liberation Sans, sans-serif" fontSize="14">
                <text x="903" y="451" transform="rotate(-3 903 451)">97.78</text>
                <text x="969" y="452" transform="rotate(8 969 452)">47.00</text>
            </g>

            <path d="M717.500 271 885.500 302.500 1210.500 282M717.500 913 885.500 944.500 1210.500 924M717.500 271V913M885.500 302V944M1042.500 250V892M1210.500 282V924" stroke="#000" fill="none" />
        </Scene>
    )
}

function ViewCube() {
    return (
        <CubeSvg width="142" height="80" viewBox="1484 305 142 80" role="img" aria-label="View cube">
            <ellipse cx="1554" cy="365" rx="69" ry="12" fill="#f6f6f6" stroke="#bbb" strokeDasharray="4 3 1 2" />
            <ellipse cx="1556" cy="364" rx="52" ry="9" fill="#fff" stroke="#bbb" strokeDasharray="4 3" />
            <ellipse cx="1556" cy="363" rx="38" ry="6" fill="#bbb" opacity=".6" />
            <path d="M1488 369h10M1494 366l5 5M1582 373h14M1588 376l10-5" stroke="#aaa" />
            <path d="m1524 311 23 1v52l-23-7z" fill="#e6e6e6" stroke="#777" />
            <path d="m1547 312 43-1-1 49-42 4z" fill="#ececec" stroke="#777" />
            <path d="M1541 322h14v32h-14z" fill="#c9ced9" opacity=".4" />
            <g fill="#8e8e8e" fontFamily="Liberation Sans Narrow, Liberation Sans, sans-serif" fontWeight="700">
                <text x="1529" y="340" fontSize="9" transform="rotate(6 1529 340)">LBT</text>
                <text x="1553" y="343" fontSize="12" transform="rotate(-4 1553 343)">FRONT</text>
            </g>
        </CubeSvg>
    )
}

const viewTools = ["detail", "shaded", "sun", "shadow", "teapot", "crop", "cropShow", "lock3d", "glasses", "bulbSmall", "props2", "analytic", "displace", "reveal"]

function Document() {
    return (
        <Center>
            <DocTabs>
                <DocTab $active><Icon name="home" /><b>{"{3D}"}</b><CloseButton aria-label="Close view"><Icon name="close" /></CloseButton></DocTab>
                <DocTab><Faded><Icon name="home" /></Faded><span>MEPOpening - Visualizar Furos</span></DocTab>
                <TabMenu aria-label="Views"><Icon name="tabMenu" /></TabMenu>
            </DocTabs>
            <CanvasRow>
                <Canvas>
                    <Model />
                    <ViewCube />
                    <NavBar>
                        <NavEnd aria-label="Close"><Icon name="dotClose" /></NavEnd>
                        <button aria-label="Steering wheel"><Icon name="wheel" /></button>
                        <Caret color="#777" />
                        <hr />
                        <button aria-label="Zoom in region"><Icon name="zoomBox" /></button>
                        <Caret color="#777" />
                        <NavEnd aria-label="Options"><Icon name="dotMenu" /></NavEnd>
                    </NavBar>
                </Canvas>
                <Scroll start={328} size={22} rest={326} />
            </CanvasRow>
            <ViewBar>
                <ScaleButton>1 : 100</ScaleButton>
                {viewTools.map(n => <ToolButton key={n} aria-label={n}><Icon name={n} /></ToolButton>)}
                <EdgeButton aria-label="Scroll left"><Icon name="chevLeft" /></EdgeButton>
                <HTrack><Grow $n={354} /><HThumb /><Grow $n={356} /></HTrack>
                <EdgeButton aria-label="Scroll right"><Icon name="chevRight" /></EdgeButton>
                <Corner>.:</Corner>
            </ViewBar>
        </Center>
    )
}

/* ---------- project browser ---------- */

const leaf = (label, last, bold) => ({ depth: 2, label, last, bold, icon: "view" })
const tree = [
    { depth: 0, sign: "-", icon: "views", label: "Views (all)", selected: true },
    { depth: 1, sign: "+", label: "Structural Plans" },
    { depth: 1, sign: "-", label: "Floor Plans" },
    leaf("Level 1"), leaf("Level 2"), leaf("Level 3"), leaf("Level 4", true),
    { depth: 1, sign: "-", label: "3D Views" },
    leaf("Analytical Model"), leaf("MEPOpening - Visualizar Furos"), leaf("{3D}", true, true),
    { depth: 1, sign: "-", label: "Elevations (Building Elevation)" },
    leaf("East"), leaf("North"), leaf("South"), leaf("West", true),
    { depth: 1, sign: "-", label: "Sections (Building Section)", last: true },
    { ...leaf("Section 1"), open: true }, { ...leaf("Section 2"), open: true }, { ...leaf("Section 3", true), open: true },
    { depth: 0, icon: "legend", label: "Legends" },
    { depth: 0, icon: "schedule", label: "Schedules/Quantities (all)" },
    { depth: 0, icon: "sheet", label: "Sheets (all)" },
    { depth: 0, sign: "-", icon: "family", label: "Families" },
    { depth: 1, sign: "+", label: "Analytical Links" },
    { depth: 1, sign: "+", label: "Annotation Symbols" },
    { depth: 1, sign: "+", label: "Boundary Conditions" },
    { depth: 1, sign: "+", label: "Cable Tray Fittings" }
]

function Browser() {
    return (
        <RightPanel>
            <PanelTitle><span>Project Browser - Modelo Base...</span><CloseButton aria-label="Close browser"><Icon name="close" /></CloseButton></PanelTitle>
            <SearchBox>
                <Icon name="search" />
                <input type="search" placeholder="Search" aria-label="Search" />
            </SearchBox>
            <TableArea>
                <Tree>
                    {tree.map(n => (
                        <TreeRow key={n.label} $selected={n.selected} $bold={n.bold}>
                            {n.depth === 1 && <Guide $w={20} $arm={10} $last={n.last} />}
                            {n.depth === 2 && <><Guide $w={20} $none={n.open} /><Guide $w={42} $arm={30} $last={n.last} /></>}
                            {n.depth < 2 && <Toggle $w={n.sign ? 22 : 20} $sign={n.sign} aria-label={n.label} disabled={!n.sign} />}
                            <IconSlot>{n.icon && <Icon name={n.icon} />}</IconSlot>
                            {n.label}
                        </TreeRow>
                    ))}
                </Tree>
                <Scroll start={6} size={245} rest={400} />
            </TableArea>
        </RightPanel>
    )
}

/* ---------- status bar ---------- */

function StatusBar() {
    return (
        <Status>
            <StatusText>Click to select, TAB for alternates, CTRL adds, SHIFT unselects.</StatusText>
            <StatusButton aria-label="Worksets"><Icon name="worksets" /></StatusButton>
            <StatusSelect><select aria-label="Workset"><option> </option></select><Icon name="chevSmall" /></StatusSelect>
            <StatusButton $off><Icon name="request" />:0</StatusButton>
            <Spacer $w={24} />
            <StatusButton aria-label="Design options"><Icon name="list" /></StatusButton>
            <StatusButton aria-label="Add to option set"><Icon name="listOff" /></StatusButton>
            <StatusSelect><select aria-label="Active option"><option>Main Model</option></select><Icon name="chevSmall" /></StatusSelect>
            <StatusEnd>
                {["selLinks", "selUnder", "selPin", "selFace", "drag", "spin"].map(n => <ToolButton key={n} aria-label={n}><Icon name={n} /></ToolButton>)}
                <StatusButton><Icon name="filter" />:1</StatusButton>
            </StatusEnd>
        </Status>
    )
}

export default function App() {
    return (
        <Window>
            <GlobalStyle />
            <TitleBar />
            <Ribbon />
            <Work>
                <Properties />
                <Document />
                <Browser />
            </Work>
            <StatusBar />
        </Window>
    )
}

/* ---------- styles ---------- */

const activeBox = css`
    background: #3a5468;
    outline: 1px solid ${C.accent};
    outline-offset: -1px;
`
const Window = styled.div`
    display: flex;
    flex-direction: column;
    height: 100vh;
    min-height: 600px;
    overflow: hidden;
`
const Svg = styled.svg`
    flex: none;
    display: block;
`
const Caret = styled.i`
    flex: none;
    display: inline-block;
    border: solid transparent;
    border-width: ${props => props.$big ? "5px 5px 0" : "4px 3px 0"};
    border-top-color: ${props => props.color || "#fff"};
`
const LeftCaret = styled.i`
    border: solid transparent;
    border-width: 5px 5px 5px 0;
    border-right-color: #fff;
`
const Title = styled.header`
    position: relative;
    flex: none;
    display: flex;
    height: 37px;
    background: ${C.dark};
`
const Group = styled.div`
    display: flex;
    align-items: center;
    height: 33px;
`
const LogoButton = styled.button`
    width: 31px;
    padding-left: 1px;
`
const ToolButton = styled.button`
    display: flex;
    align-items: center;
    justify-content: center;
    width: 30px;
    height: 28px;
    ${props => props.$active && activeBox}
`
const WideTool = styled(ToolButton)`
    width: 36px;
`
const CaretButton = styled.button`
    display: flex;
    align-items: center;
    justify-content: center;
    width: 15px;
    height: 28px;
`
const CustomizeButton = styled(CaretButton)`
    width: 22px;
`
const UserButton = styled.button`
    display: flex;
    align-items: center;
    gap: 5px;
    padding: 0 5px 0 2px;
`
const Separator = styled.div`
    width: 1px;
    height: 28px;
    margin: 0 4px 0 3px;
    background: #4a515d;
`
const Spacer = styled.div`
    width: ${props => props.$w || 4}px;
`
const Caption = styled.div`
    flex: 1;
    min-width: 0;
    font-family: "Noto Sans", "Open Sans", sans-serif;
    text-align: center;
    line-height: 26px;
    white-space: nowrap;
    overflow: hidden;
`
const Grabber = styled.div`
    position: absolute;
    top: 0;
    left: 50%;
    width: 42px;
    height: 16px;
    margin-left: -21px;
    border: 1px solid #6b6b6b;
    border-top: 0;
    background:
        linear-gradient(#777, #777) center 5px / 30px 1px no-repeat,
        linear-gradient(#777, #777) center 9px / 30px 1px no-repeat,
        #202020;
`
const WindowButtons = styled.div`
    display: flex;
    padding-left: 8px;
    button {
        display: flex;
        align-items: center;
        justify-content: center;
        width: 32px;
        height: 28px;
    }
`
const TabRow = styled.nav`
    flex: none;
    display: flex;
    gap: 1px;
    height: 25px;
    background: ${C.dark};
    padding-left: 1px;
`
const RibbonTab = styled.button`
    padding: 0 12px;
    line-height: 25px;
    white-space: nowrap;
`
const FileTab = styled(RibbonTab)`
    width: 56px;
    margin-right: 1px;
    background: #2a7db5;
`
const ContextTab = styled(RibbonTab)`
    margin-left: 1px;
    background: ${C.green};
`
const ModeButton = styled.button`
    display: flex;
    align-items: center;
    gap: 6px;
    padding-left: 28px;
`
const RibbonBody = styled.div`
    flex: none;
    display: flex;
    height: 121px;
    background: ${C.olive};
    border-bottom: 1px solid ${C.dark};
`
const Panels = styled.div`
    display: flex;
    padding-left: 1px;
    border-top: 1px solid ${C.olive};
`
const ContextPanels = styled.div`
    flex: 1;
    display: flex;
    padding-left: 3px;
    border-top: 2px solid ${C.green};
`
const Panel = styled.section`
    flex: none;
    display: flex;
    flex-direction: column;
    width: ${props => props.$w}px;
    background: ${C.panel};
    border-right: 1px solid ${C.olive};
`
const PanelBody = styled.div`
    flex: 1;
    display: flex;
    justify-content: center;
    gap: ${props => props.$gap ?? 4}px;
    padding-top: 2px;
`
const PanelLabel = styled.div`
    display: flex;
    align-items: center;
    justify-content: center;
    gap: 8px;
    height: 22px;
    margin: ${props => props.$context ? "0 2px" : "0"};
    padding-top: 2px;
    background: ${props => props.$context ? C.olive : "none"};
`
const Grid = styled.div`
    display: grid;
    grid-template-columns: ${props => props.$cols};
    grid-auto-rows: ${props => props.$row}px;
`
const IconTool = styled.button`
    display: flex;
    align-items: center;
    justify-content: center;
    margin: ${props => props.$active ? "2px 0" : "0"};
    ${props => props.$active && activeBox}
`
const SmallTool = styled.button`
    display: flex;
    align-items: center;
    gap: 6px;
    span {
        margin-right: 6px;
    }
`
const BigTool = styled.button`
    display: flex;
    flex-direction: column;
    align-items: center;
    min-width: 54px;
    height: 90px;
    padding-top: 4px;
    color: ${C.text};
    ${props => props.$active && activeBox}
    span {
        margin-top: 5px;
    }
    i {
        margin-top: 4px;
    }
    &:disabled {
        color: ${C.off};
    }
`
const OptionsBar = styled.div`
    flex: none;
    display: flex;
    align-items: center;
    height: 33px;
    padding-left: 11px;
    background: ${C.olive};
`
const OptionsTitle = styled.div`
    width: 203px;
    margin-right: 14px;
    line-height: 28px;
    border-right: 2px solid #e8eaec;
`
const CheckLabel = styled.label`
    display: flex;
    align-items: center;
    gap: 3px;
`
const Check = styled.input`
    appearance: none;
    display: block;
    width: ${props => props.$size}px;
    height: ${props => props.$size}px;
    border: 1px solid #9ba1ab;
    &:checked {
        border-color: #6d7480;
        background: #6d7480;
    }
    &:checked::before {
        content: "";
        display: block;
        width: 8px;
        height: 4px;
        margin: 2px;
        border: solid #2f3743;
        border-width: 0 0 2px 2px;
        transform: rotate(-45deg);
    }
`
const Work = styled.main`
    flex: 1;
    display: flex;
    min-height: 0;
    border-top: 2px solid ${C.frame};
`
const LeftPanel = styled.aside`
    flex: none;
    display: flex;
    flex-direction: column;
    width: 367px;
    padding: 0 4px 0 2px;
    background: ${C.track};
    border-right: 3px solid ${C.frame};
`
const PanelTitle = styled.div`
    flex: none;
    display: flex;
    align-items: center;
    justify-content: space-between;
    height: 21px;
    padding: 0 1px 0 2px;
    background: ${C.dark};
    white-space: nowrap;
`
const CloseButton = styled.button`
    color: #a2a8b1;
`
const TypeSelector = styled.div`
    display: flex;
    align-items: center;
    gap: 7px;
    height: 87px;
    padding: 0 10px 0 4px;
    background: ${C.panel};
    border: 1px solid ${C.line};
    border-bottom: 0;
    span {
        flex: 1;
        white-space: nowrap;
    }
`
const Preview = styled.div`
    width: 80px;
    height: 80px;
    background: #fff;
`
const FilterRow = styled.div`
    display: flex;
    align-items: flex-start;
    height: 36px;
    padding-right: 6px;
    background: ${C.panel};
`
const FilterBox = styled.div`
    flex: 1;
    display: flex;
    align-items: center;
    height: 32px;
    padding: 0 6px 0 4px;
    border-bottom: 2px solid #67768d;
    color: ${C.thumb};
`
const FilterSelect = styled.select`
    appearance: none;
    flex: 1;
    color: ${C.text};
`
const EditType = styled.button`
    display: flex;
    align-items: center;
    gap: 5px;
    height: 30px;
    padding-left: 5px;
`
const TableArea = styled.div`
    flex: 1;
    display: flex;
    min-height: 0;
`
const TableClip = styled.div`
    flex: 1;
    overflow: hidden;
    background: ${C.panel};
`
const Table = styled.table`
    width: 100%;
    table-layout: fixed;
    border-spacing: 0;
    tr {
        height: 24px;
    }
`
const GroupCell = styled.th`
    height: 24px;
    padding: 0 6px 0 2px;
    background: ${C.dark};
    border-bottom: 1px solid ${C.line};
    color: #fff;
    text-align: left;
    line-height: 23px;
    div {
        display: flex;
        justify-content: space-between;
    }
    svg {
        margin-top: 4px;
    }
`
const Cell = styled.td`
    height: 24px;
    padding: ${props => props.$pad ? "4px 4px 0" : "0"};
    border: solid ${C.line};
    border-width: 0 0 1px 1px;
    vertical-align: top;
`
const NameCell = styled.th`
    height: 24px;
    padding: 0 0 0 10px;
    border-bottom: 1px solid ${C.line};
    color: ${props => props.$off ? C.dim : C.text};
    font-weight: 400;
    line-height: 22px;
    text-align: left;
    vertical-align: top;
    white-space: nowrap;
    overflow: hidden;
`
const ValueInput = styled.input`
    display: block;
    width: 100%;
    height: 22px;
    padding-left: 2px;
    &:disabled {
        color: ${C.dim};
    }
`
const LevelSelect = styled.select`
    appearance: none;
    display: block;
    width: 100%;
    height: 23px;
    padding-left: 1px;
    border: 1px solid #cfc9c4;
`
const MoreButton = styled.button`
    display: block;
    width: 12px;
    height: 21px;
    margin: 1px 0 0 1px;
    border: 1px solid ${C.thumb};
`
const ScrollBar = styled.div`
    flex: none;
    display: flex;
    flex-direction: column;
    width: 22px;
    background: ${C.track};
    color: #a2a8b1;
`
const ScrollButton = styled.button`
    display: flex;
    align-items: center;
    justify-content: center;
    height: 20px;
`
const Track = styled.div`
    flex: 1;
    display: flex;
    flex-direction: column;
    align-items: center;
    border: solid #414958;
    border-width: 1px 0;
`
const Grow = styled.div`
    flex: ${props => props.$n} 0 0;
`
const Thumb = styled.div`
    flex: ${props => props.$n} 0 0;
    width: 10px;
    border-radius: 5px;
    background: ${C.thumb};
`
const PaletteFooter = styled.div`
    display: flex;
    align-items: center;
    gap: 4px;
    height: 31px;
    padding: 0 0 2px 2px;
`
const SortButton = styled.button`
    display: flex;
    align-items: center;
    justify-content: center;
    width: 25px;
    height: 26px;
    border-radius: ${props => props.$active ? "4px" : "0"};
    background: ${props => props.$active ? "#36779a" : C.panel};
`
const ApplyButton = styled.button`
    width: 83px;
    height: 23px;
    margin: 0 3px 0 auto;
    border: 1px solid #4e5766;
    border-radius: 4px;
    color: #7b818b;
`
const Center = styled.div`
    flex: 1;
    display: flex;
    flex-direction: column;
    min-width: 0;
    padding-right: 3px;
    background: ${C.dark};
`
const DocTabs = styled.div`
    flex: none;
    display: flex;
    height: 27px;
    background: #454f61;
    border-bottom: 2px solid ${C.dark};
`
const DocTab = styled.div`
    display: flex;
    align-items: center;
    gap: 9px;
    width: ${props => props.$active ? "159px" : "auto"};
    padding: 0 6px 0 5px;
    background: ${props => props.$active ? C.dark : "none"};
    button {
        margin-left: auto;
    }
`
const Faded = styled.span`
    opacity: .5;
`
const TabMenu = styled.button`
    margin-left: auto;
    padding: 0 6px;
`
const CanvasRow = styled.div`
    flex: 1;
    display: flex;
    min-height: 0;
`
const Canvas = styled.div`
    position: relative;
    flex: 1;
    min-width: 0;
    background: #fff;
`
const Scene = styled.svg`
    display: block;
    width: 100%;
    height: 100%;
`
const CubeSvg = styled.svg`
    position: absolute;
    top: 60px;
    right: 20px;
`
const NavBar = styled.div`
    position: absolute;
    top: 171px;
    right: 1px;
    display: flex;
    flex-direction: column;
    align-items: center;
    width: 35px;
    height: 118px;
    padding: 1px 2px;
    border: 2px solid #bcbcbc;
    border-radius: 6px;
    background: #f4f4f4;
    hr {
        width: 26px;
        margin: 4px 0 8px;
        border: 0;
        border-top: 1px solid #b5b5b5;
    }
    button + i {
        margin-top: 7px;
    }
`
const NavEnd = styled.button`
    align-self: flex-end;
    &:first-child {
        margin-bottom: 9px;
    }
    &:last-child {
        margin-top: auto;
    }
`
const ViewBar = styled.div`
    flex: none;
    display: flex;
    height: 25px;
    background: ${C.panel};
    border-bottom: 3px solid ${C.dark};
    button {
        height: 22px;
    }
`
const ScaleButton = styled.button`
    width: 91px;
    padding-left: 4px;
    font-size: 12px;
`
const EdgeButton = styled.button`
    display: flex;
    align-items: center;
    justify-content: center;
    width: 20px;
    background: ${C.track};
    color: #a2a8b1;
`
const HTrack = styled.div`
    flex: 1;
    display: flex;
    align-items: center;
    background: ${C.track};
    border: solid #414958;
    border-width: 0 1px;
`
const HThumb = styled.div`
    width: 21px;
    height: 10px;
    border-radius: 5px;
    background: ${C.thumb};
`
const Corner = styled.div`
    width: 22px;
    background: ${C.track};
    color: #8b919b;
    text-align: center;
    line-height: 22px;
`
const RightPanel = styled.aside`
    flex: none;
    display: flex;
    flex-direction: column;
    width: 249px;
    padding: 0 0 3px;
    background: ${C.panel};
    border-left: 2px solid ${C.frame};
`
const SearchBox = styled.label`
    flex: none;
    display: flex;
    align-items: center;
    gap: 10px;
    height: 29px;
    margin: 11px 11px 10px 12px;
    padding-left: 10px;
    background: #2d333e;
    input {
        flex: 1;
        min-width: 0;
    }
    input::placeholder {
        color: #8d929a;
    }
`
const Tree = styled.ul`
    flex: 1;
    margin: 0;
    padding: 0 0 0 2px;
    list-style: none;
    overflow: hidden;
`
const TreeRow = styled.li`
    display: flex;
    align-items: center;
    height: 25px;
    white-space: nowrap;
    font-weight: ${props => props.$bold ? 700 : 400};
    ${props => props.$selected && css`
        background: #343b49;
        outline: 1px solid #424c5c;
        outline-offset: -1px;
    `}
`
const Guide = styled.i`
    flex: none;
    width: ${props => props.$w}px;
    height: 25px;
    background:
        repeating-linear-gradient(#6a7280 0 4px, transparent 4px 6px) 10px 0 / 1px ${props => props.$none ? 0 : props.$last ? "13px" : "25px"} no-repeat,
        repeating-linear-gradient(90deg, #6a7280 0 4px, transparent 4px 6px) 10px 12px / ${props => props.$arm || 0}px 1px no-repeat;
`
const Toggle = styled.button`
    flex: none;
    width: ${props => props.$w}px;
    height: 25px;
    background:
        linear-gradient(#a5abb5, #a5abb5) center / ${props => props.$sign ? 10 : 0}px 3px no-repeat,
        linear-gradient(#a5abb5, #a5abb5) center / 3px ${props => props.$sign === "+" ? 10 : 0}px no-repeat;
`
const IconSlot = styled.span`
    padding: 0 5px 0 ${props => props.children ? 5 : 0}px;
`
const Status = styled.footer`
    flex: none;
    display: flex;
    align-items: center;
    height: 31px;
    background: ${C.panel};
    border-top: 2px solid ${C.frame};
    border-bottom: 1px solid ${C.dark};
`
const StatusText = styled.div`
    width: 683px;
    padding-left: 2px;
    white-space: nowrap;
`
const StatusButton = styled.button`
    display: flex;
    align-items: center;
    justify-content: center;
    min-width: 30px;
    height: 28px;
    color: ${props => props.$off ? C.dim : C.text};
`
const StatusSelect = styled.div`
    display: flex;
    align-items: center;
    width: 259px;
    height: 28px;
    margin: 0 6px 0 2px;
    padding: 0 7px 0 5px;
    border-bottom: 1px solid #5c6a80;
    color: #66748a;
    select {
        appearance: none;
        flex: 1;
        color: ${C.dim};
    }
`
const StatusEnd = styled.div`
    display: flex;
    align-items: center;
    margin-left: auto;
    padding-right: 78px;
    button:last-child {
        padding-left: 3px;
    }
`
